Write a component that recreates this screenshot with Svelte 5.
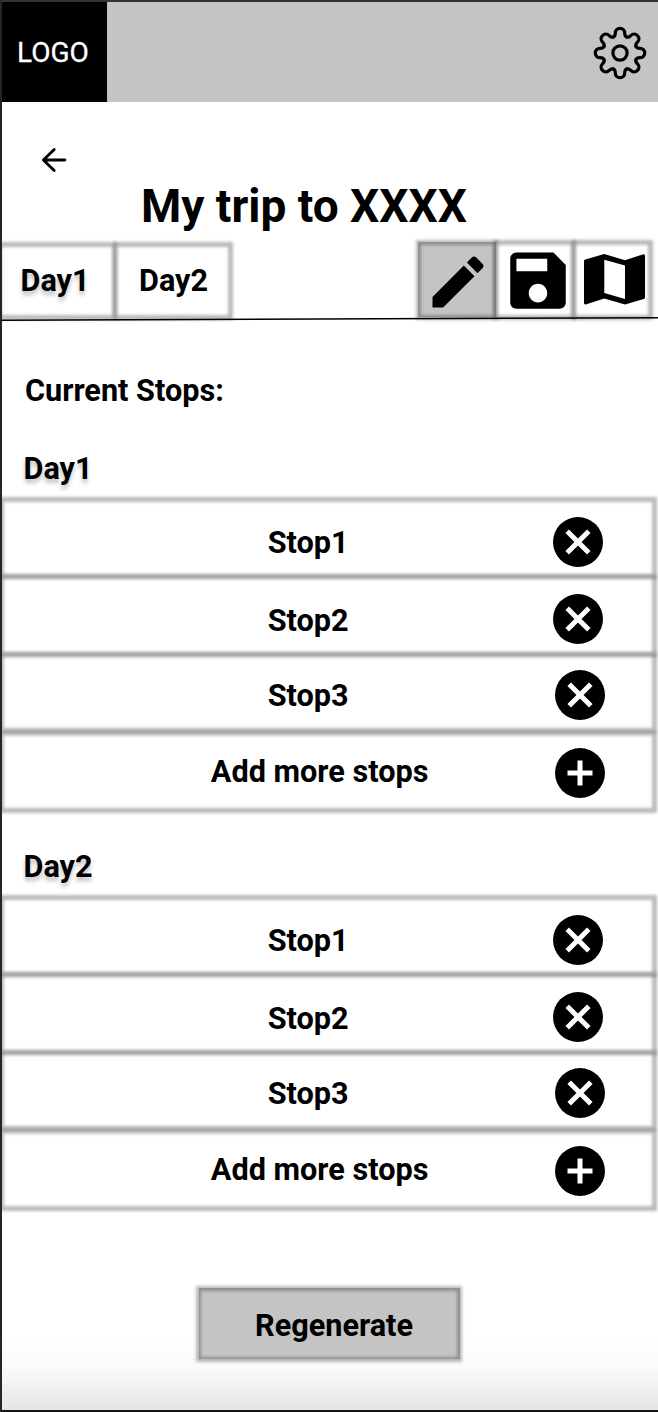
<script>
  const stops = ['Stop1', 'Stop2', 'Stop3'];
  const days = ['Day1', 'Day2'];
  const tooth =
    'C-5.1 -16.6 -4.7 -18.4 -4.7 -20C-4.7 -22.8 -2.6 -24.7 0 -24.7C2.6 -24.7 4.7 -22.8 4.7 -20C4.7 -18.4 5.1 -16.6 6.6 -16';
</script>

<div class="screen">
  <header>
    <div class="logo">LOGO</div>
    <svg class="gear" width="56" height="56" viewBox="-28 -28 56 56" fill="none" stroke="#000" stroke-width="3.2" stroke-linecap="round">
      {#each [0, 45, 90, 135, 180, 225, 270, 315] as angle}
        <path d={'M-6.6 -16' + tooth} transform={`rotate(${angle})`} />
      {/each}
      <circle r="7.1" />
    </svg>
  </header>

  <svg class="back" width="26" height="26" viewBox="0 0 26 26" fill="none" stroke="#000" stroke-width="2.8" stroke-linecap="round" stroke-linejoin="round">
    <path d="M23.9 13H2.4M13.2 2.4L2.4 13L13.2 23.6" />
  </svg>
  <h1>My trip to XXXX</h1>

  <nav>
    <div class="tab box first"><span class="shade">Day1</span></div>
    <div class="tab box"><span>Day2</span></div>
    <div class="tools">
      <div class="tool box active">
        <svg width="68" height="68" viewBox="0 0 24 24"><path d="M3 17.25V21h3.75L17.81 9.94l-3.75-3.75L3 17.25zM20.71 7.04c.39-.39.39-1.02 0-1.41l-2.34-2.34c-.39-.39-1.02-.39-1.41 0l-1.83 1.83 3.75 3.75 1.83-1.83z" /></svg>
      </div>
      <div class="tool box">
        <svg class="save" width="74" height="75" viewBox="0 0 24 24" preserveAspectRatio="none"><path d="M17 3H5c-1.11 0-2 .9-2 2v14c0 1.1.89 2 2 2h14c1.1 0 2-.9 2-2V7l-4-4zm-5 16c-1.66 0-3-1.34-3-3s1.34-3 3-3 3 1.34 3 3-1.34 3-3 3zm3-10H5V5h10v4z" /></svg>
      </div>
      <div class="tool box">
        <svg class="map" width="61" height="51" viewBox="0 0 61 51"><path fill-rule="evenodd" d="M0 7Q0 5.8 1.3 5.4L20.3 0L41 6.3L59.3 .3Q61 0 61 1.8V43.4Q61 44.6 59.7 45L41 50.6L20.3 44.6L1.7 50.4Q0 50.6 0 49ZM20.3 5.8V39L41 45V11.6Z" /></svg>
      </div>
    </div>
    <svg class="rule" width="656" height="6" viewBox="0 0 656 6"><path d="M0 4.3L656 1.8" stroke="#000" stroke-width="1.5" /></svg>
  </nav>

  <h2>Current Stops:</h2>

  {#each days as day}
    <section>
      <h3 class="shade">{day}</h3>
      {#each stops as stop}
        <div class="row box">
          <span>{stop}</span>
          <svg width="50" height="50" viewBox="-25 -25 50 50"><circle r="25" /><path d="M-10.8 -10.8L10.8 10.8M10.8 -10.8L-10.8 10.8" stroke="#fff" stroke-width="5" /></svg>
        </div>
      {/each}
      <div class="row add box">
        <span>Add more stops</span>
        <svg width="50" height="50" viewBox="-25 -25 50 50"><circle r="25" /><path d="M-12.5 0H12.5M0 -12.5V12.5" stroke="#fff" stroke-width="5" /></svg>
      </div>
    </section>
  {/each}

  <button class="box">Regenerate</button>
</div>

<style>
  :global(body) { background: #fff; }
  .screen {
    box-sizing: border-box;
    width: 658px;
    height: 1412px;
    border-top: 2px solid #333;
    border-left: 2px solid #252525;
    border-bottom: 2px solid #161616;
    overflow: hidden;
    display: flex;
    flex-direction: column;
    background: linear-gradient(#fff 1335px, #fafafa 1365px, #e5e5e5 1408px);
    font: 700 30.65px/36px Roboto, sans-serif;
    color: #000;
  }
  header { display: flex; flex: none; height: 100px; background: #c4c4c4; align-items: center; justify-content: space-between; }
  .logo { width: 105px; height: 100px; background: #000; color: #fff; font-weight: 400; font-size: 28px; line-height: 102px; text-indent: 15px; -webkit-text-stroke: .3px #fff; }
  .gear { margin: 2px 10px 0 0; }
  .back { flex: none; margin: 45px 0 0 39px; }
  h1 { margin: 6px 0 0 139px; font-size: 46px; line-height: 54px; white-space: nowrap; }
  .box { position: relative; }
  .box::before { content: ''; position: absolute; inset: -2.5px; border: 5px solid rgba(0, 0, 0, .27); filter: blur(1.8px); pointer-events: none; }
  nav { position: relative; flex: none; display: flex; height: 74px; margin-top: 10px; }
  .tab { width: 116px; box-sizing: border-box; padding: 20px 0 0 24px; }
  .tab::before { top: -1.5px; right: -2px; }
  .first { width: 113px; padding-left: 18.5px; }
  .first::before { left: -5px; }
  .tab + .tab::before, .tool + .tool::before { border-left-color: rgba(0, 0, 0, .15); }
  .shade { text-shadow: 0 4px 4px rgba(0, 0, 0, .25); }
  .tools { display: flex; margin: -1px 0 0 187px; height: 75px; }
  .tool { width: 77.5px; }
  .tool svg { display: block; position: relative; margin: 6px 0 0 6px; }
  .tool .save { margin: 1px 0 0 5px; }
  .tool .map { margin: 12px 0 0 11px; }
  .active { background: #c4c4c4; }
  .rule { position: absolute; left: 0; bottom: -5px; }
  h2 { margin: 56px 0 0 23px; font-size: inherit; }
  section { margin-top: 42px; }
  section + section { margin-top: 38px; }
  h3 { margin: 0 0 12px 21.5px; font-size: inherit; }
  .row { display: flex; justify-content: space-between; height: 77px; padding: 0 51px 0 265.7px; margin-right: 4px; box-sizing: border-box; align-items: center; }
  .row::before { left: -3px; }
  .row + .row::before { border-top-color: rgba(0, 0, 0, .13); }
  .row svg { position: relative; top: 4px; }
  .row span { position: relative; top: 5px; }
  .row:nth-child(3) { height: 78px; }
  .row:nth-child(3) svg { top: 4px; }
  .row:nth-child(3) span { top: 6px; }
  .row:nth-child(4) { height: 76px; padding-right: 49.5px; }
  .row:nth-child(4) svg { top: 3px; }
  .row:nth-child(4) span { top: 4px; }
  .add { height: 77px; margin-top: 3px; padding: 0 49.5px 0 208.8px; }
  .row.add::before { border-top-color: rgba(0, 0, 0, .22); }
  .add svg { top: 1.5px; }
  .add span { top: .5px; }
  section + section { padding-top: 1px; }
  button { width: 261px; height: 71px; flex: none; margin: 80px 0 0 196.5px; padding: 5px 0 0 10px; border: 0; background: #c4c4c4; font: inherit; color: inherit; }
  button::before { border-color: rgba(0, 0, 0, .2); }
</style>
